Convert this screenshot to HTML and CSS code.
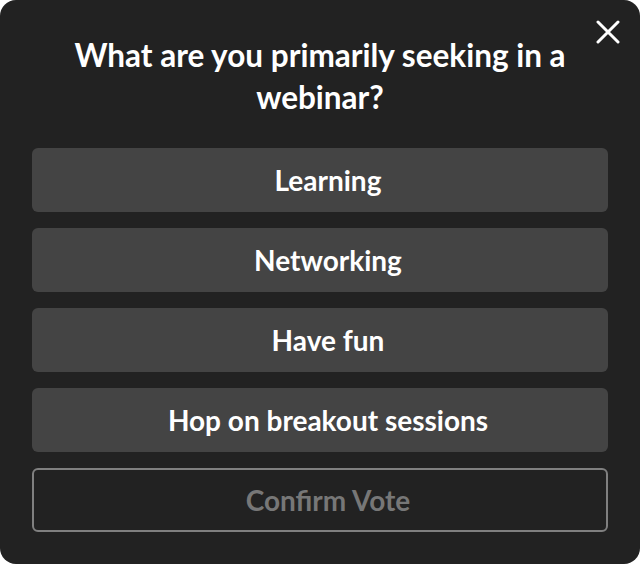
FILE: index.html
```html
<!DOCTYPE html>
<html>
<head>
<meta charset="utf-8">
<link rel="stylesheet" href="styles.css">
</head>
<body>
<div class="card">
  <button class="close" aria-label="Close">
    <svg width="24" height="24" viewBox="0 0 24 24"><path d="M2 2 L22 22 M22 2 L2 22" stroke="#fff" stroke-width="3" stroke-linecap="round" fill="none"/></svg>
  </button>
  <h1 class="title">What are you primarily seeking in a webinar?</h1>
  <div class="options">
    <button class="option">Learning</button>
    <button class="option">Networking</button>
    <button class="option">Have fun</button>
    <button class="option">Hop on breakout sessions</button>
    <button class="confirm">Confirm Vote</button>
  </div>
</div>
</body>
</html>
```
FILE: styles.css
```css
html, body { margin: 0; padding: 0; background: #fff; }
body { font-family: Lato, "Noto Sans", sans-serif; }
.card {
  position: relative;
  width: 640px;
  height: 564px;
  box-sizing: border-box;
  background: #222222;
  border-radius: 16px;
  padding: 34px 32px 32px;
}
.close {
  position: absolute;
  top: 20px;
  right: 20px;
  background: none;
  border: 0;
  padding: 0;
  width: 24px;
  height: 24px;
  display: flex;
}
.title {
  margin: 0 30px 30px;
  color: #fff;
  font-size: 31.5px;
  line-height: 42px;
  font-weight: 700;
  text-align: center;
}
.options { display: flex; flex-direction: column; gap: 16px; }
.option, .confirm {
  height: 64px;
  border-radius: 6px;
  font-family: Lato, "Noto Sans", sans-serif;
  font-weight: 700;
  font-size: 28px;
  display: flex;
  align-items: center;
  justify-content: center;
  padding: 0 0 0 16px;
}
.option { background: #444444; color: #fff; border: 0; }
.confirm { background: transparent; color: #777; border: 2px solid #808080; }
```
